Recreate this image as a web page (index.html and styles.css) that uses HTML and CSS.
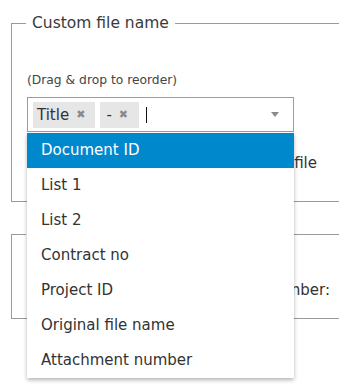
FILE: index.html
```html
<!DOCTYPE html>
<html lang="en">

<head>
    <meta charset="UTF-8">
    <meta name="viewport" content="width=device-width, initial-scale=1.0">
    <title>Custom file name</title>
    <link rel="stylesheet" href="styles.css">
</head>

<body>
    <fieldset class="group">
        <legend>Custom file name</legend>
        <div class="hint">(Drag &amp; drop to reorder)</div>
        <div class="picker">
            <div class="picker-box">
                <span class="tag">Title <span class="tag-x">&#x2716;</span></span>
                <span class="tag tag-sep">- <span class="tag-x">&#x2716;</span></span>
                <span class="caret"></span>
                <span class="arrow"></span>
            </div>
            <ul class="menu">
                <li class="active">Document ID</li>
                <li>List 1</li>
                <li>List 2</li>
                <li>Contract no</li>
                <li>Project ID</li>
                <li>Original file name</li>
                <li>Attachment number</li>
            </ul>
        </div>
        <div class="row row-file">Use the original extension of file</div>
    </fieldset>

    <fieldset class="group group-second">
        <legend>Numbering</legend>
        <div class="row row-number">Start number:</div>
    </fieldset>
</body>

</html>
```

FILE: styles.css
```css
html {
    overflow: hidden;
    height: 100%;
}

body {
    font-family: 'DejaVu Sans', Verdana, sans-serif;
    margin: 0;
    padding: 14px 0 0 11px;
    min-height: 100%;
    box-sizing: border-box;
    background: #fff;
    color: #333;
}

.group {
    width: 400px;
    margin: 0;
    padding: 0 0 0 15px;
    border: 1px solid #9a9a9a;
    box-sizing: border-box;
}

.group legend {
    font-size: 15.5px;
    line-height: 18px;
    padding: 0 6px;
    margin-left: -1px;
    color: #3a3a3a;
}

.hint {
    margin-top: 41px;
    font-size: 12.3px;
    line-height: 14px;
    color: #444;
}

.picker {
    position: relative;
    width: 267px;
    margin-top: 10px;
}

.picker-box {
    display: flex;
    align-items: center;
    height: 35px;
    padding: 0 5px;
    border: 1px solid #72a6d9;
    box-sizing: border-box;
    gap: 5px;
}

.tag {
    display: flex;
    align-items: center;
    height: 26px;
    padding: 0 10px 0 4px;
    background: #e6e6e6;
    font-size: 15px;
    color: #333;
}

.tag-sep {
    padding-left: 6px;
    padding-right: 11px;
}

.tag-x {
    font-size: 11px;
    color: #8a8a8a;
    margin-left: 7px;
}

.caret {
    width: 1px;
    height: 16px;
    background: #111;
    margin-left: 2px;
}

.arrow {
    margin-left: auto;
    margin-right: 9px;
    border-left: 4px solid transparent;
    border-right: 4px solid transparent;
    border-top: 5px solid #8a8a8a;
}

.menu {
    position: absolute;
    top: 36px;
    left: 0;
    right: 0;
    margin: 0;
    padding: 0;
    list-style: none;
    background: #fff;
    box-shadow: 0 2px 4px rgba(0, 0, 0, 0.3);
    z-index: 2;
}

.menu li {
    height: 35px;
    line-height: 35px;
    padding-left: 14px;
    font-size: 15px;
    color: #333;
}

.menu li.active {
    background: #0088cc;
    color: #fff;
}

.row {
    font-size: 15px;
    line-height: 18px;
    color: #333;
    text-align: right;
}

.row-file {
    width: 290px;
    margin: 22px 0 29px;
}

.group-second {
    margin-top: 23px;
}

.row-number {
    width: 303px;
    margin: 38px 0 19px;
}
```
